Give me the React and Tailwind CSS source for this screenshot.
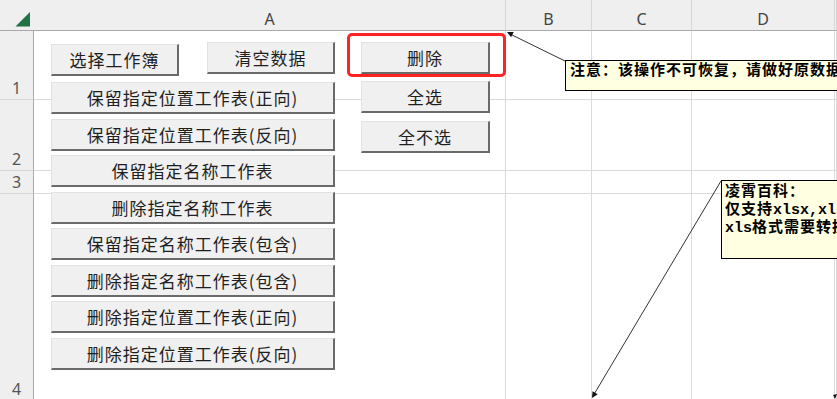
import React from 'react';

const LEFT_BUTTONS = [
  '保留指定位置工作表(正向)',
  '保留指定位置工作表(反向)',
  '保留指定名称工作表',
  '删除指定名称工作表',
  '保留指定名称工作表(包含)',
  '删除指定名称工作表(包含)',
  '删除指定位置工作表(正向)',
  '删除指定位置工作表(反向)',
];

const COLS = ['A', 'B', 'C', 'D', ''];
const ROWS = ['1', '2', '3', '4'];

function Btn({ children, className = '' }) {
  return (
    <div
      className={`h-[32px] flex items-center justify-center bg-[#f0f0f0] border-t border-l border-t-[#e2e2e2] border-l-[#e2e2e2] border-r-2 border-b-2 border-r-[#6a6a6a] border-b-[#6a6a6a] text-[17px] leading-none tracking-[1px] text-[#1f1f1f] whitespace-nowrap ${className}`}
      style={{ fontFamily: '"Noto Sans CJK SC", sans-serif' }}
    >
      {children}
    </div>
  );
}

function Sheet() {
  return (
    <div className="grid grid-cols-[34px_472px_86px_100px_143px_1fr] grid-rows-[31px_69px_71px_23px_207px]">
      {/* header row */}
      <div className="bg-[#efefef] border-b border-[#a9a9a9] relative">
        <svg width="34" height="31" className="absolute left-0 top-0">
          <polygon points="30,12 30,26.5 15.5,26.5" fill="#217346" />
        </svg>
      </div>
      {COLS.map((c, i) => (
        <div
          key={i}
          className="bg-[#efefef] border-b border-b-[#a9a9a9] border-r border-r-[#d6d6d6] flex items-end justify-center pb-[1px] text-[16px] leading-[20px] text-[#444]"
          style={{ fontFamily: '"Noto Sans", sans-serif' }}
        >
          {c}
        </div>
      ))}

      {/* body rows */}
      {ROWS.map((r) => (
        <React.Fragment key={r}>
          <div
            className="bg-[#efefef] border-r border-r-[#a9a9a9] border-b border-b-[#d6d6d6] flex items-end justify-center pb-[1px] text-[16px] leading-[20px] text-[#555]"
            style={{ fontFamily: '"Noto Sans", sans-serif' }}
          >
            {r}
          </div>
          {COLS.map((c, i) => (
            <div key={i} className="border-r border-b border-[#dadada]" />
          ))}
        </React.Fragment>
      ))}
    </div>
  );
}

export default function App() {
  return (
    <div className="relative w-[837px] h-[399px] overflow-hidden bg-white">
      <Sheet />

      {/* form buttons over column A */}
      <div className="absolute left-[51px] top-[42px] flex flex-col">
        <div className="flex items-start gap-[28px]">
          <Btn className="mt-[2px] w-[128px]">选择工作簿</Btn>
          <Btn className="w-[128px]">清空数据</Btn>
        </div>
        <div className="mt-[6px] flex flex-col gap-[4.5px]">
          {LEFT_BUTTONS.map((t) => (
            <Btn key={t} className="w-[284px]">{t}</Btn>
          ))}
        </div>
      </div>

      <div className="absolute left-[347px] top-[33px] flex flex-col">
        <div className="w-[159px] h-[44px] border-[3px] border-[#ff2424] rounded-[5px] pl-[11px] pt-[6px]">
          <Btn className="w-[129px]">删除</Btn>
        </div>
        <Btn className="ml-[14px] mt-[4px] w-[129px]">全选</Btn>
        <Btn className="ml-[14px] mt-[8px] w-[129px]">全不选</Btn>
      </div>

      {/* comment connectors */}
      <svg className="absolute inset-0 pointer-events-none" width="837" height="399">
        <line x1="510" y1="34" x2="565" y2="61" stroke="#333" strokeWidth="1" />
        <polygon points="507,32 513.7,31.9 511.1,37.3" fill="#111" />
        <line x1="721" y1="181" x2="593" y2="396" stroke="#333" strokeWidth="1" />
        <polygon points="592,398 597.7,394.3 592.5,391.3" fill="#111" />
        <polygon points="835,399 837,394 833,395" fill="#111" />
      </svg>

      {/* comments */}
      <div
        className="absolute left-[565px] top-[60px] w-[330px] h-[31px] bg-[#ffffe1] border border-black pl-[4px] pt-[2px] text-[15px] leading-[18px] font-bold tracking-[1px] text-black whitespace-nowrap"
        style={{ fontFamily: '"Liberation Mono", "Noto Sans CJK SC", monospace' }}
      >
        注意：该操作不可恢复，请做好原数据备份！
      </div>

      <div
        className="absolute left-[721px] top-[180px] w-[220px] h-[79px] bg-[#ffffe1] border border-black pl-[3px] pt-[3px] text-[15px] leading-[18px] font-bold tracking-[1px] text-black whitespace-nowrap"
        style={{ fontFamily: '"Liberation Mono", "Noto Sans CJK SC", monospace' }}
      >
        <div>凌霄百科：</div>
        <div>
          仅支持<span className="tracking-normal">xlsx,xlsm</span>格式
        </div>
        <div>
          <span className="tracking-normal">xls</span>格式需要转换
        </div>
      </div>
    </div>
  );
}
